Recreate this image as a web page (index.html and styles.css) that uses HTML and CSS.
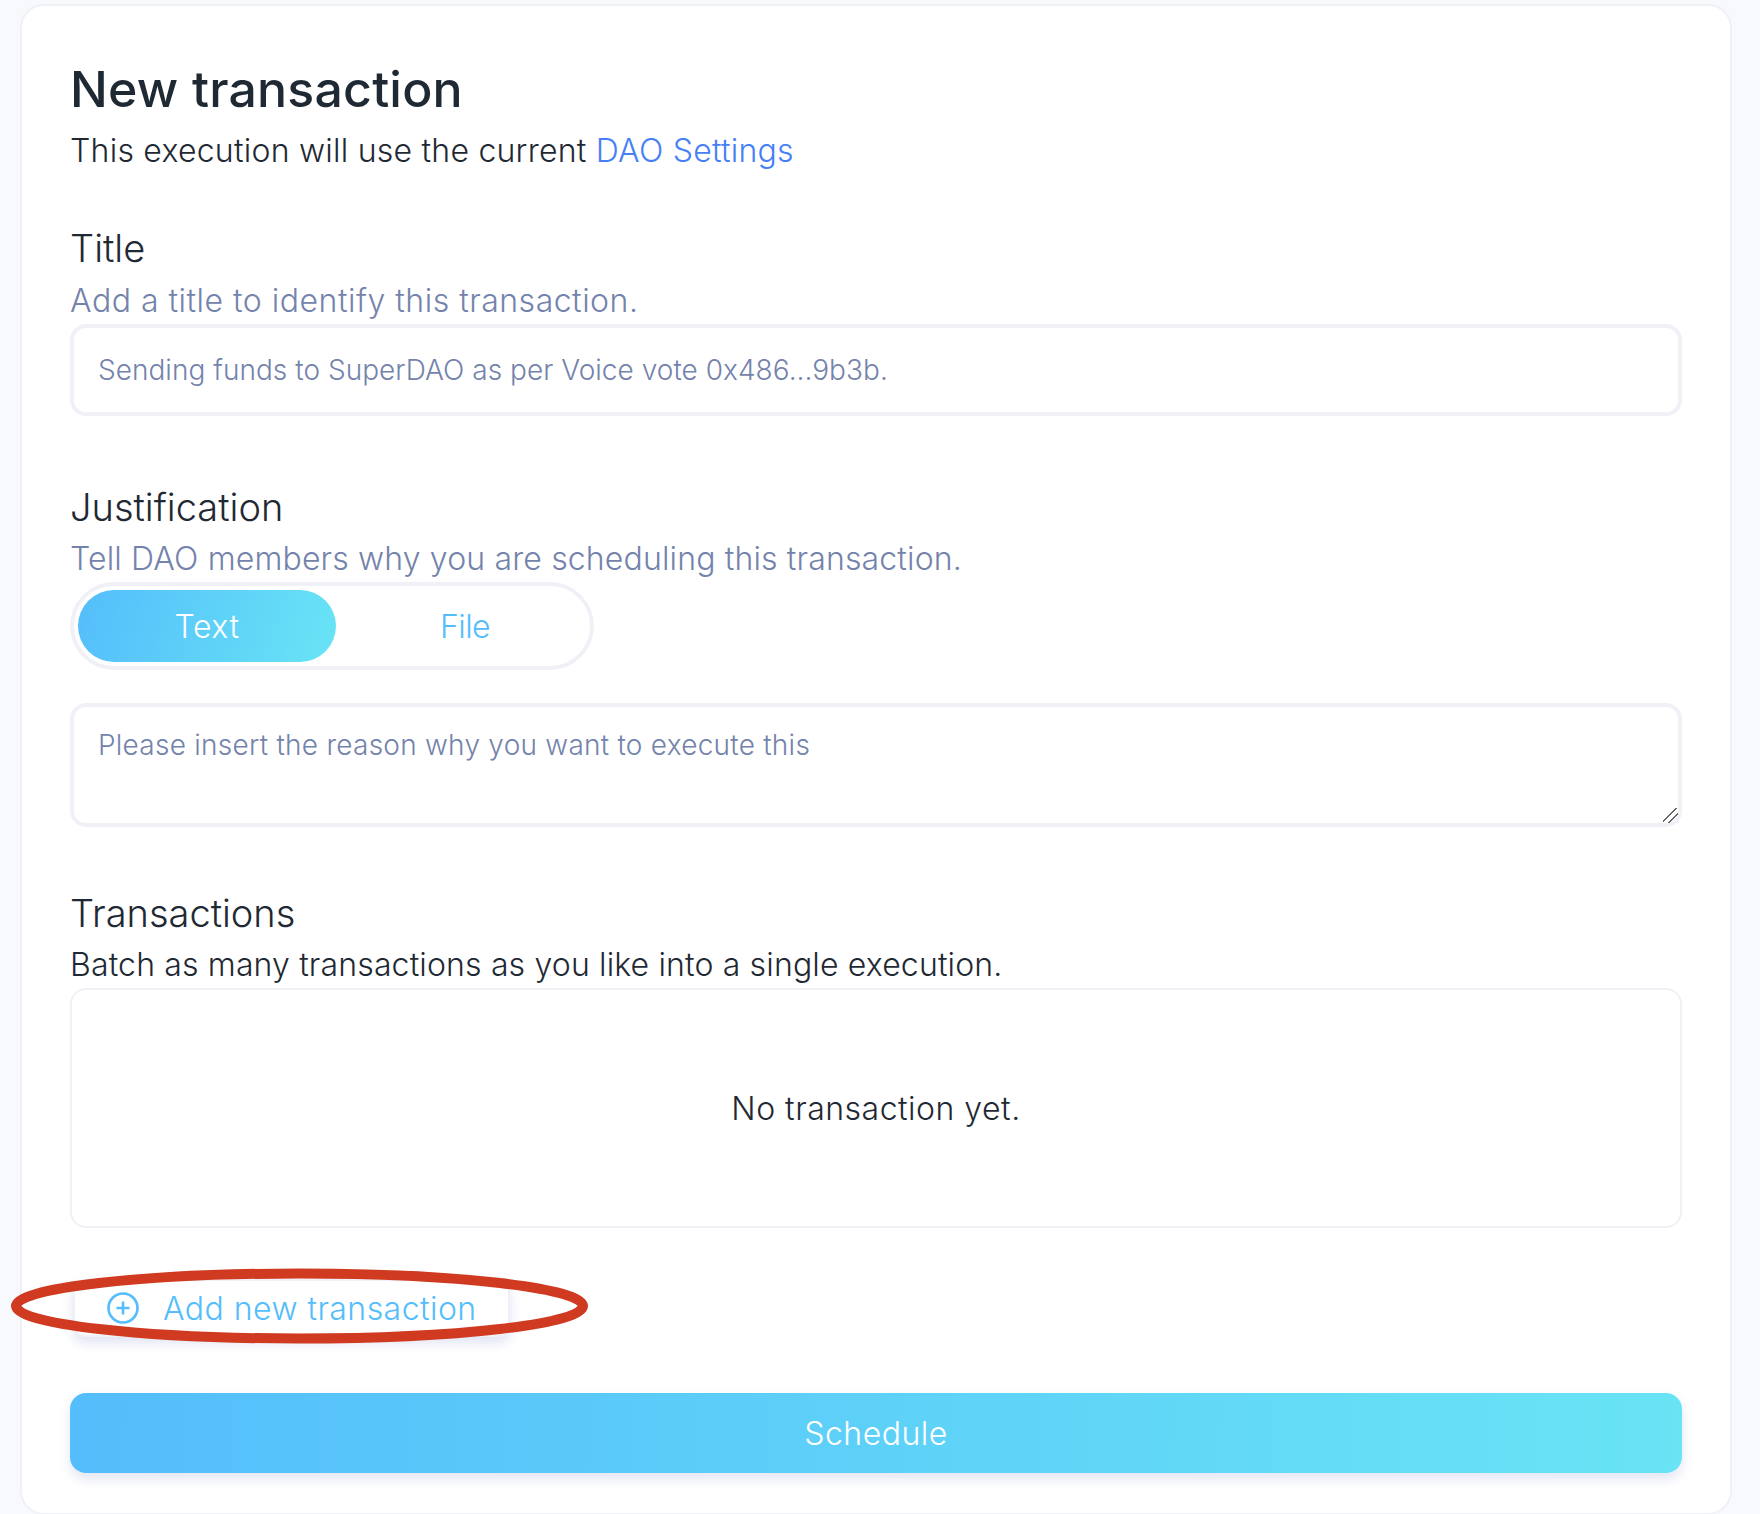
FILE: index.html
```html
<!DOCTYPE html>
<html lang="en">
<head>
    <meta charset="UTF-8">
    <meta name="viewport" content="width=device-width, initial-scale=1.0">
    <title>New transaction</title>
    <link rel="stylesheet" href="styles.css">
</head>
<body>
    <main class="card">
        <h1>New transaction</h1>
        <p class="intro">This execution will use the current <a href="#">DAO Settings</a></p>

        <section class="field field-title">
            <h2>Title</h2>
            <p class="hint">Add a title to identify this transaction.</p>
            <input class="text-input" type="text" placeholder="Sending funds to SuperDAO as per Voice vote 0x486...9b3b.">
        </section>

        <section class="field field-justification">
            <h2>Justification</h2>
            <p class="hint">Tell DAO members why you are scheduling this transaction.</p>
            <div class="toggle">
                <button class="toggle-option active">Text</button>
                <button class="toggle-option">File</button>
            </div>
            <textarea class="text-area" placeholder="Please insert the reason why you want to execute this"></textarea>
        </section>

        <section class="field field-transactions">
            <h2>Transactions</h2>
            <p class="hint dark">Batch as many transactions as you like into a single execution.</p>
            <div class="empty-box">No transaction yet.</div>
        </section>

        <div class="add-row">
            <button class="add-button">
                <svg class="add-icon" viewBox="0 0 32 32" width="32" height="32">
                    <circle cx="16" cy="16" r="14.5" fill="none" stroke="#54bdfb" stroke-width="2.6"/>
                    <path d="M16 9.5v13M9.5 16h13" fill="none" stroke="#54bdfb" stroke-width="2.6"/>
                </svg>
                <span>Add new transaction</span>
            </button>
            <svg class="red-ring" viewBox="0 0 577 76" width="577" height="76">
                <ellipse cx="288.5" cy="38" rx="283.5" ry="32.5" fill="none" stroke="#cf3a20" stroke-width="10"/>
            </svg>
        </div>

        <button class="schedule">Schedule</button>
    </main>
</body>
</html>
```

FILE: styles.css
```css
* {
    box-sizing: border-box;
}
body {
    font-family: 'Inter', 'Liberation Sans', sans-serif;
    font-weight: 300;
    margin: 0;
    background-color: #f8f9fc;
    color: #1f2933;
}
.card {
    margin: 4px 28px 0 20px;
    height: 1511px;
    padding: 0 48px;
    background: #fff;
    border: 2px solid #f0f1f7;
    border-radius: 24px;
}
h1 {
    margin: 0;
    padding-top: 55px;
    font-size: 50px;
    line-height: 56px;
    font-weight: 500;
    letter-spacing: 0.2px;
}
.intro {
    margin: 12px 0 0;
    font-size: 32px;
    line-height: 44px;
    letter-spacing: 0.24px;
}
.intro a {
    color: #4580f5;
    text-decoration: none;
}
h2 {
    margin: 0;
    font-size: 38px;
    line-height: 44px;
    font-weight: 300;
}
.hint {
    margin: 8px 0 0;
    font-size: 32px;
    line-height: 44px;
    color: #7483ab;
    letter-spacing: 0.15px;
}
.hint.dark {
    color: #1f2933;
}
.field-title .hint {
    margin-top: 9px;
    margin-bottom: 1px;
    letter-spacing: 0.5px;
}
.field-title {
    margin-top: 53px;
}
.field-justification {
    margin-top: 69px;
}
.field-transactions {
    margin-top: 64px;
}
.text-input, .text-area {
    display: block;
    width: 100%;
    margin: 0;
    font-family: inherit;
    font-weight: 300;
    font-size: 28px;
    color: #1f2933;
    background: #fff;
    border: 4px solid #f0f1f7;
    border-radius: 16px;
    padding: 0 24px;
    outline: none;
}
.text-input {
    height: 92px;
    letter-spacing: 0.03px;
}
.text-input::placeholder, .text-area::placeholder {
    color: #7483ab;
    opacity: 1;
}
.text-area {
    height: 124px;
    margin-top: 33px;
    padding-top: 20px;
    line-height: 36px;
    letter-spacing: 0.25px;
}
.text-area::-webkit-scrollbar {
    width: 16px;
    height: 16px;
}
.text-area::-webkit-resizer {
    background: linear-gradient(135deg, transparent 41%, #666 41%, #666 47%, transparent 47%, transparent 66%, #666 66%, #666 72%, transparent 72%);
}
.toggle {
    display: flex;
    width: 524px;
    height: 88px;
    margin-top: 1px;
    padding: 4px;
    border: 4px solid #f0f1f7;
    border-radius: 44px;
}
.toggle-option {
    flex: 0 0 258px;
    border: none;
    background: none;
    font-family: inherit;
    font-weight: 300;
    font-size: 32px;
    letter-spacing: -0.6px;
    color: #54bdfb;
    border-radius: 36px;
    padding: 0;
}
.toggle-option.active {
    color: #fff;
    letter-spacing: 0.6px;
    background: linear-gradient(107deg, #54bdfb, #68e4f5);
}
.empty-box {
    display: flex;
    align-items: center;
    justify-content: center;
    height: 240px;
    margin-top: 1px;
    font-size: 32px;
    letter-spacing: 0.5px;
    border: 2px solid #f0f1f7;
    border-radius: 16px;
}
.add-row {
    position: relative;
    height: 58px;
    margin-top: 51px;
}
.add-button {
    display: flex;
    align-items: center;
    gap: 24px;
    width: 437px;
    height: 58px;
    margin-left: 3px;
    padding: 0 0 0 32px;
    background: #fff;
    border: 2px solid #f0f1f7;
    border-radius: 12px;
    box-shadow: 0 6px 12px rgba(116, 131, 200, 0.22);
    font-family: inherit;
    font-weight: 300;
    font-size: 32px;
    letter-spacing: 0.45px;
    color: #54bdfb;
}
.add-icon {
    flex: none;
}
.red-ring {
    position: absolute;
    left: -59px;
    top: -11px;
}
.schedule {
    display: block;
    width: 100%;
    height: 80px;
    margin-top: 56px;
    border: none;
    border-radius: 16px;
    background: linear-gradient(91deg, #54bdfb, #68e4f5);
    box-shadow: 0 6px 12px rgba(116, 131, 200, 0.2);
    font-family: inherit;
    font-weight: 300;
    font-size: 32px;
    letter-spacing: 0.5px;
    color: #fff;
}
```
